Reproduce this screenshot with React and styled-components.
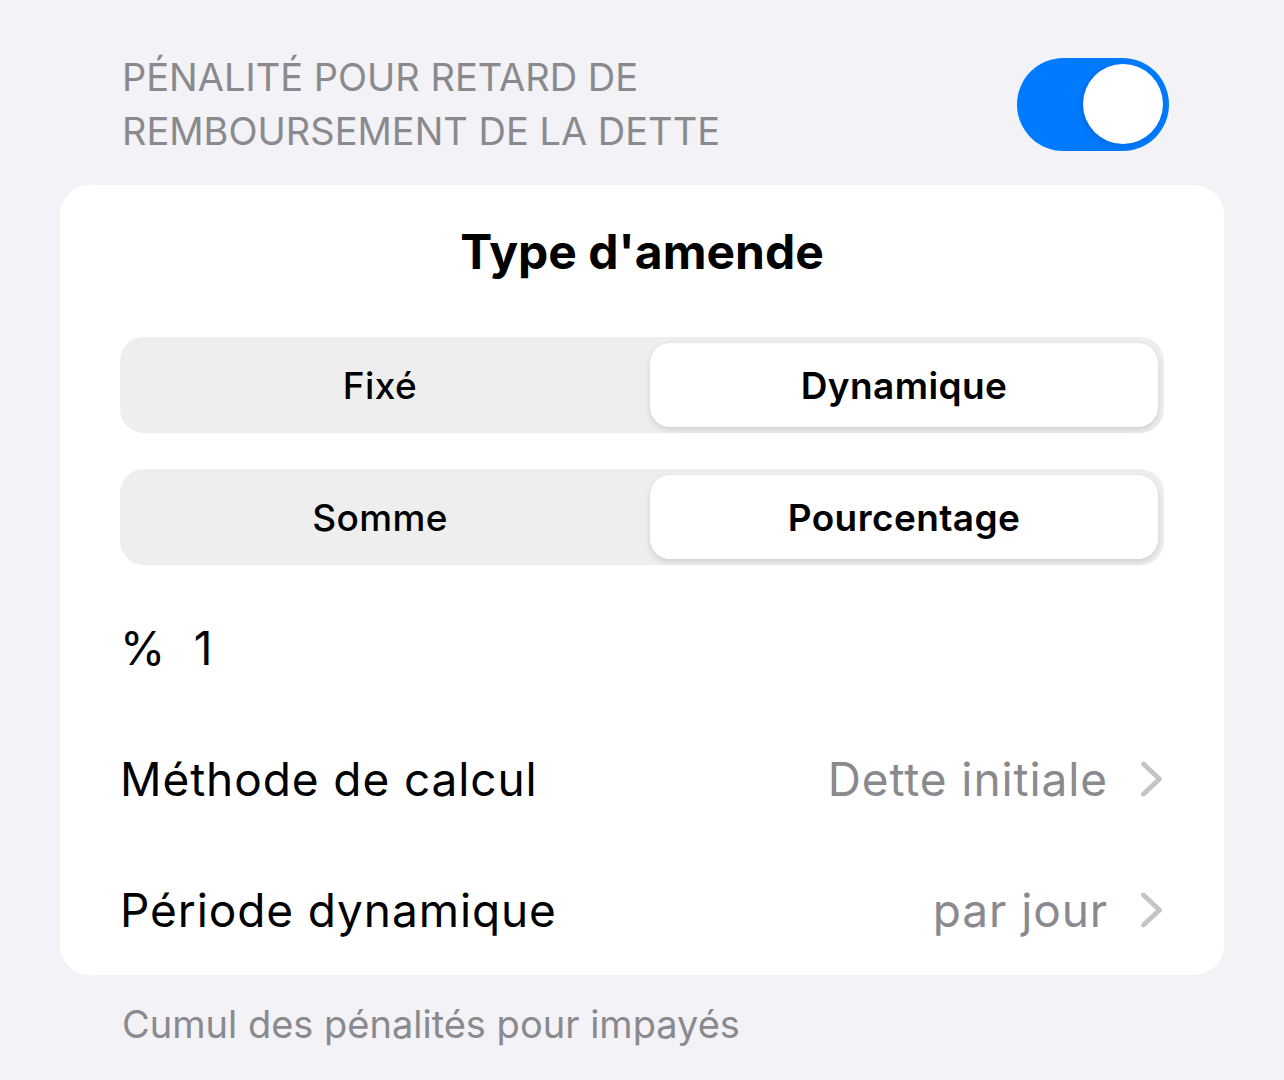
import React from "react"
import styled, { createGlobalStyle } from "styled-components"

let GlobalStyle = createGlobalStyle`
    html, body {
        margin: 0;
        padding: 0;
        background: #f2f2f7;
        font-family: Inter, "Noto Sans", sans-serif;
        -webkit-font-smoothing: antialiased;
    }
`
let Page = styled.div`
    min-height: 1080px;
    padding: 50px 60px 0;
    box-sizing: border-box;
`
let Header = styled.div`
    display: flex;
    align-items: center;
    justify-content: space-between;
    padding: 0 55px 0 62px;
    height: 108px;
`
let HeaderTitle = styled.div`
    color: #8a8a8e;
    font-size: 38px;
    line-height: 54px;
    text-transform: uppercase;
`
let Toggle = styled.div`
    width: 152px;
    height: 93px;
    border-radius: 47px;
    background: ${(p) => (p.on ? "#007aff" : "#e9e9ea")};
    display: flex;
    align-items: center;
    justify-content: ${(p) => (p.on ? "flex-end" : "flex-start")};
    padding: 0 6px;
    box-sizing: border-box;
`
let Knob = styled.div`
    width: 80px;
    height: 80px;
    border-radius: 50%;
    background: #fff;
    box-shadow: -2px 2px 6px rgba(0, 0, 0, 0.12);
`
let Card = styled.div`
    margin-top: 27px;
    background: #fff;
    border-radius: 30px;
    padding: 39px 60px 0;
`
let CardTitle = styled.div`
    text-align: center;
    font-size: 48px;
    font-weight: 700;
    line-height: 56px;
    color: #000;
    margin-bottom: 57px;
`
let Segmented = styled.div`
    display: grid;
    grid-template-columns: 1fr 1fr;
    column-gap: 16px;
    background: #eeeeef;
    border-radius: 24px;
    padding: 6px;
    height: 96px;
    box-sizing: border-box;
    margin-bottom: ${(p) => p.gap || 0}px;
`
let Segment = styled.div`
    display: flex;
    align-items: center;
    justify-content: center;
    border-radius: 20px;
    font-size: 37px;
    letter-spacing: 0.4px;
    color: #000;
    font-weight: ${(p) => (p.active ? 600 : 500)};
    background: ${(p) => (p.active ? "#fff" : "transparent")};
    box-shadow: ${(p) => (p.active ? "0 3px 6px rgba(0,0,0,0.12), 0 0 1px rgba(0,0,0,0.08)" : "none")};
`
let Rows = styled.div`
    margin-top: 17px;
`
let Row = styled.div`
    display: flex;
    align-items: center;
    justify-content: space-between;
    height: 131px;
    font-size: 46px;
    letter-spacing: 0.9px;
    color: #000;
`
let Value = styled.div`
    display: flex;
    align-items: center;
    gap: 32px;
    color: #8a8a8e;
`
let Chevron = styled.svg`
    width: 23px;
    height: 36px;
    margin-right: 1px;
`
let Footer = styled.div`
    padding: 27px 62px 0;
    color: #8a8a8e;
    font-size: 38px;
    line-height: 44px;
`

let ChevronIcon = () => (
    <Chevron viewBox="0 0 23 36">
        <path d="M3.5 3 L19.5 18 L3.5 33" fill="none" stroke="#c4c4c7" strokeWidth="4.8" strokeLinecap="round" strokeLinejoin="round" />
    </Chevron>
)

export default function App() {
    return (
        <Page>
            <GlobalStyle />
            <Header>
                <HeaderTitle>
                    Pénalité pour retard de
                    <br />
                    remboursement de la dette
                </HeaderTitle>
                <Toggle on>
                    <Knob />
                </Toggle>
            </Header>
            <Card>
                <CardTitle>Type d'amende</CardTitle>
                <Segmented gap={36}>
                    <Segment>Fixé</Segment>
                    <Segment active>Dynamique</Segment>
                </Segmented>
                <Segmented>
                    <Segment>Somme</Segment>
                    <Segment active>Pourcentage</Segment>
                </Segmented>
                <Rows>
                    <Row>% &nbsp;1</Row>
                    <Row>
                        Méthode de calcul
                        <Value>
                            Dette initiale
                            <ChevronIcon />
                        </Value>
                    </Row>
                    <Row>
                        Période dynamique
                        <Value>
                            par jour
                            <ChevronIcon />
                        </Value>
                    </Row>
                </Rows>
            </Card>
            <Footer>Cumul des pénalités pour impayés</Footer>
        </Page>
    )
}
